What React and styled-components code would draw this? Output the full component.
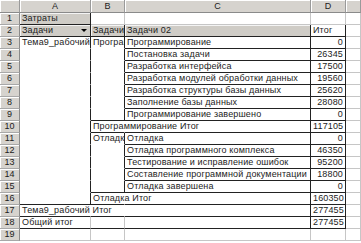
import React from "react";
import styled, { createGlobalStyle, css } from "styled-components";

const Global = createGlobalStyle`
  html, body {
    margin: 0;
    padding: 0;
    background: #fff;
  }
  body {
    font-family: "Liberation Sans", Arial, sans-serif;
  }
`;

const LIGHT = "#c6c6c6";
const DARK = "#222";
const FACE = "#d6d3ce";

const edge = v => (v === "d" ? DARK : v === "l" ? LIGHT : "transparent");

const Sheet = styled.div`
  display: grid;
  grid-template-columns: 20px 71px 34px 186px 35px 15px;
  grid-template-rows: 13px repeat(19, 12px);
  width: 361px;
  height: 243px;
  overflow: hidden;
  font-size: 9px;
  color: #1c1c1c;
`;

const ColHead = styled.div`
  box-sizing: border-box;
  background: ${FACE};
  border-right: 1px solid #9a9a9a;
  border-bottom: 1px solid #8a8a8a;
  box-shadow: inset 1px 1px 0 #fff;
  text-align: center;
  line-height: 12px;
  font-size: 9px;
`;

const RowHead = styled.div`
  box-sizing: border-box;
  background: ${FACE};
  border-right: 1px solid #8a8a8a;
  border-bottom: 1px solid #a8a8a8;
  box-shadow: inset 1px 1px 0 #fff;
  text-align: center;
  line-height: 11px;
  font-size: 9px;
`;

const Cell = styled.div`
  position: relative;
  box-sizing: border-box;
  border-right: 1px solid ${p => edge(p.$r)};
  border-bottom: 1px solid ${p => edge(p.$b)};
  padding: 0 2px;
  line-height: 11px;
  letter-spacing: 0.15px;
  white-space: nowrap;
  text-align: ${p => (p.$num ? "right" : "left")};
  overflow: ${p => (p.$clip ? "hidden" : "visible")};
  z-index: ${p => (p.$clip ? 0 : 1)};
  ${p =>
    p.$btn &&
    css`
      background: #cfccc6;
      box-shadow: inset 1px 1px 0 #f4f4f4;
    `}
`;

const Arrow = styled.span`
  position: absolute;
  right: 3px;
  top: 4px;
  width: 0;
  height: 0;
  border-left: 3px solid transparent;
  border-right: 3px solid transparent;
  border-top: 3px solid #000;
`;

// r / b: right and bottom edge — d dark, l light grid, n none
const A = (t, r, b, extra = {}) => ({ t, r, b, ...extra });

const rows = [
  [A("Затраты", "d", "d", { btn: true }), A("", "l", "l"), A("", "l", "l"), A("", "l", "l")],
  [
    A("Задачи", "d", "d", { btn: true, arrow: true }),
    A("Задачи", "d", "d", { btn: true, clip: true }),
    A("Задачи 02", "d", "d", { btn: true }),
    A("Итог", "d", "d"),
  ],
  [A("Тема9_рабочий", "d", "n", { clip: true }), A("Программирование", "d", "n", { clip: true }), A("Программирование", "d", "d"), A("0", "d", "d", { num: true })],
  [A("", "d", "n"), A("", "d", "n"), A("Постановка задачи", "d", "d"), A("26345", "d", "d", { num: true })],
  [A("", "d", "n"), A("", "d", "n"), A("Разработка интерфейса", "d", "d"), A("17500", "d", "d", { num: true })],
  [A("", "d", "n"), A("", "d", "n"), A("Разработка модулей обработки данных", "d", "d"), A("19560", "d", "d", { num: true })],
  [A("", "d", "n"), A("", "d", "n"), A("Разработка структуры базы данных", "d", "d"), A("25620", "d", "d", { num: true })],
  [A("", "d", "n"), A("", "d", "n"), A("Заполнение базы данных", "d", "d"), A("28080", "d", "d", { num: true })],
  [A("", "d", "n"), A("", "d", "d"), A("Программирование завершено", "d", "d"), A("0", "d", "d", { num: true })],
  [A("", "d", "n"), A("Программирование Итог", "n", "d"), A("", "d", "d"), A("117105", "d", "d", { num: true })],
  [A("", "d", "n"), A("Отладка", "d", "n", { clip: true }), A("Отладка", "d", "d"), A("0", "d", "d", { num: true })],
  [A("", "d", "n"), A("", "d", "n"), A("Отладка программного комплекса", "d", "d"), A("46350", "d", "d", { num: true })],
  [A("", "d", "n"), A("", "d", "n"), A("Тестирование и исправление ошибок", "d", "d"), A("95200", "d", "d", { num: true })],
  [A("", "d", "n"), A("", "d", "n"), A("Составление программной документации", "d", "d"), A("18800", "d", "d", { num: true })],
  [A("", "d", "n"), A("", "d", "d"), A("Отладка завершена", "d", "d"), A("0", "d", "d", { num: true })],
  [A("", "d", "d"), A("Отладка Итог", "n", "d"), A("", "d", "d"), A("160350", "d", "d", { num: true })],
  [A("Тема9_рабочий Итог", "n", "d"), A("", "n", "d"), A("", "d", "d"), A("277455", "d", "d", { num: true })],
  [A("Общий итог", "l", "d"), A("", "l", "d"), A("", "d", "d"), A("277455", "d", "d", { num: true })],
  [A("", "l", "l"), A("", "l", "l"), A("", "l", "l"), A("", "l", "l")],
];

export default function App() {
  return (
    <>
      <Global />
      <Sheet>
        <ColHead />
        {["A", "B", "C", "D", ""].map((c, i) => (
          <ColHead key={i}>{c}</ColHead>
        ))}
        {rows.map((cells, i) => (
          <React.Fragment key={i}>
            <RowHead>{i + 1}</RowHead>
            {cells.map((c, j) => (
              <Cell
                key={j}
                $r={c.r}
                $b={c.b}
                $btn={c.btn}
                $clip={c.clip}
                $num={c.num}
              >
                {c.t}
                {c.arrow && <Arrow />}
              </Cell>
            ))}
            <Cell $r="l" $b="l" />
          </React.Fragment>
        ))}
      </Sheet>
    </>
  );
}
